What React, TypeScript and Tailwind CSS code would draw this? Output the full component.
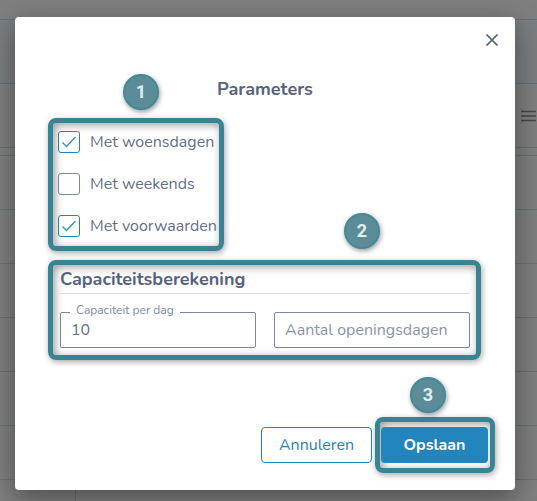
import { useState, type ReactNode } from "react";

// ----------------------------------------------------------------------------
// Callout: teal frame with a numbered badge around one step of the dialog
// ----------------------------------------------------------------------------

function Callout({
  step,
  badgeClass,
  className,
  children,
}: {
  step: number;
  badgeClass: string;
  className: string;
  children: ReactNode;
}) {
  return (
    <div
      className={`relative rounded-lg border-5 border-[#388394] shadow-[1px_2px_6px_rgba(0,0,0,0.35),inset_2px_2px_8px_rgba(0,0,0,0.4)] ${className}`}
    >
      {children}
      <span
        className={`absolute flex size-9 items-center justify-center rounded-full border-2 border-[#43899a] bg-[#5b8c98] font-['Roboto',sans-serif] text-lg leading-none font-bold text-[#e2edf0] shadow-[1px_2px_5px_rgba(0,0,0,0.4)] ${badgeClass}`}
      >
        {step}
      </span>
    </div>
  );
}

function CheckRow({ label, initial }: { label: string; initial: boolean }) {
  const [checked, setChecked] = useState(initial);
  return (
    <label className="flex h-[22px] items-center gap-[10px] whitespace-nowrap">
      <span className="relative size-[22px] shrink-0">
        <input
          type="checkbox"
          checked={checked}
          onChange={(e) => setChecked(e.target.checked)}
          className="block size-[22px] appearance-none rounded-[3px] border border-[#7c86a0] bg-white checked:border-[#2285be]"
        />
        {checked && (
          <svg viewBox="0 0 22 22" className="pointer-events-none absolute inset-0 size-[22px]" fill="none">
            <path d="M4.5 11.5 8.5 15.5 17.5 6" stroke="#2f8fc6" strokeWidth="1.3" />
          </svg>
        )}
      </span>
      {label}
    </label>
  );
}

const ROWS = [1, 2, 3, 4, 5, 6];

function Backdrop() {
  return (
    <div className="absolute inset-0 flex flex-col overflow-hidden bg-[#7f7f7f]">
      <div className="h-5 shrink-0 border-b border-[#65727b]" />
      <div className="h-16 shrink-0 border-b border-[#65727b] bg-[#7b7e80]" />
      <div className="flex h-16 shrink-0 items-center justify-end border-b border-[#677073]">
        <svg viewBox="0 0 16 12" className="h-3 w-4" stroke="#46464c" strokeWidth="1.4">
          <path d="M0 1.5H15M0 6H15M0 10.5H15" />
        </svg>
      </div>
      <div className="h-2 shrink-0 border-b border-[#677073]" />
      {ROWS.map((row) => (
        <div key={row} className="h-[54px] shrink-0 border-b border-[#677073]" />
      ))}
      <div className="ml-[75px] grow border-l border-[#677073]" />
    </div>
  );
}

export default function App() {
  const [perDay, setPerDay] = useState("10");
  const [openDays, setOpenDays] = useState("");

  return (
    <div className="relative min-h-screen pt-[17px] pr-[22px] pb-[11px] pl-[15px] font-['Nunito','Noto_Sans',sans-serif] text-base text-[#646f8c]">
      <Backdrop />
      <div
        role="dialog"
        aria-labelledby="dialog-title"
        className="relative rounded-[4px] bg-white pb-[17px] shadow-[0_8px_28px_rgba(0,0,0,0.4)]"
      >
        <div className="flex justify-end pt-4 pr-4">
          <button type="button" aria-label="Sluiten" className="size-[14px] text-[#4f5f80]">
            <svg viewBox="0 0 14 14" className="size-[14px]" stroke="currentColor" strokeWidth="1.7">
              <path d="M1.5 1.5 12.5 12.5M12.5 1.5 1.5 12.5" />
            </svg>
          </button>
        </div>

        <h1 id="dialog-title" className="mt-7 text-center text-lg leading-7 font-bold text-[#56627f]">
          Parameters
        </h1>

        <div className="flex flex-col gap-[9px] pt-[15px] pr-[34px] pl-[33px]">
          <Callout
            step={1}
            badgeClass="-top-[49px] left-[70px]"
            className="flex w-44 flex-col gap-5 pt-2 pb-[9px] pl-[5px]"
          >
            <CheckRow label="Met woensdagen" initial={true} />
            <CheckRow label="Met weekends" initial={false} />
            <CheckRow label="Met voorwaarden" initial={true} />
          </Callout>

          <Callout step={2} badgeClass="-top-[52px] right-24" className="pr-[6px] pb-[7px] pl-[7px]">
            <h2 className="border-b border-[#d9e1e8] text-lg leading-7 font-bold text-[#56627f]">
              Capaciteitsberekening
            </h2>
            <div className="mt-[18px] grid grid-cols-2 gap-[18px]">
              <div className="relative">
                <label
                  htmlFor="per-day"
                  className="absolute -top-[10px] left-[10px] bg-white px-[6px] text-xs leading-4 whitespace-nowrap text-[#8089a3]"
                >
                  Capaciteit per dag
                </label>
                <input
                  id="per-day"
                  value={perDay}
                  onChange={(e) => setPerDay(e.target.value)}
                  className="block h-9 w-full rounded-[2px] border border-[#7c86a0] px-[10px]"
                />
              </div>
              <input
                aria-label="Aantal openingsdagen"
                placeholder="Aantal openingsdagen"
                value={openDays}
                onChange={(e) => setOpenDays(e.target.value)}
                className="block h-9 w-full rounded-[2px] border border-[#7c86a0] px-[10px] placeholder:text-[#8a93ac]"
              />
            </div>
          </Callout>
        </div>

        <div className="mt-[57px] flex items-center justify-end gap-[3px] pr-5">
          <button type="button" className="h-9 w-[111px] rounded-[4px] border border-[#2285be] bg-white text-[#2b7fb5]">
            Annuleren
          </button>
          <Callout step={3} badgeClass="-top-[45px] left-[30px]" className="py-[5px] pr-[2px] pl-px">
            <button type="button" className="block h-9 w-[107px] rounded-[4px] bg-[#2285be] font-bold text-white">
              Opslaan
            </button>
          </Callout>
        </div>
      </div>
    </div>
  );
}
